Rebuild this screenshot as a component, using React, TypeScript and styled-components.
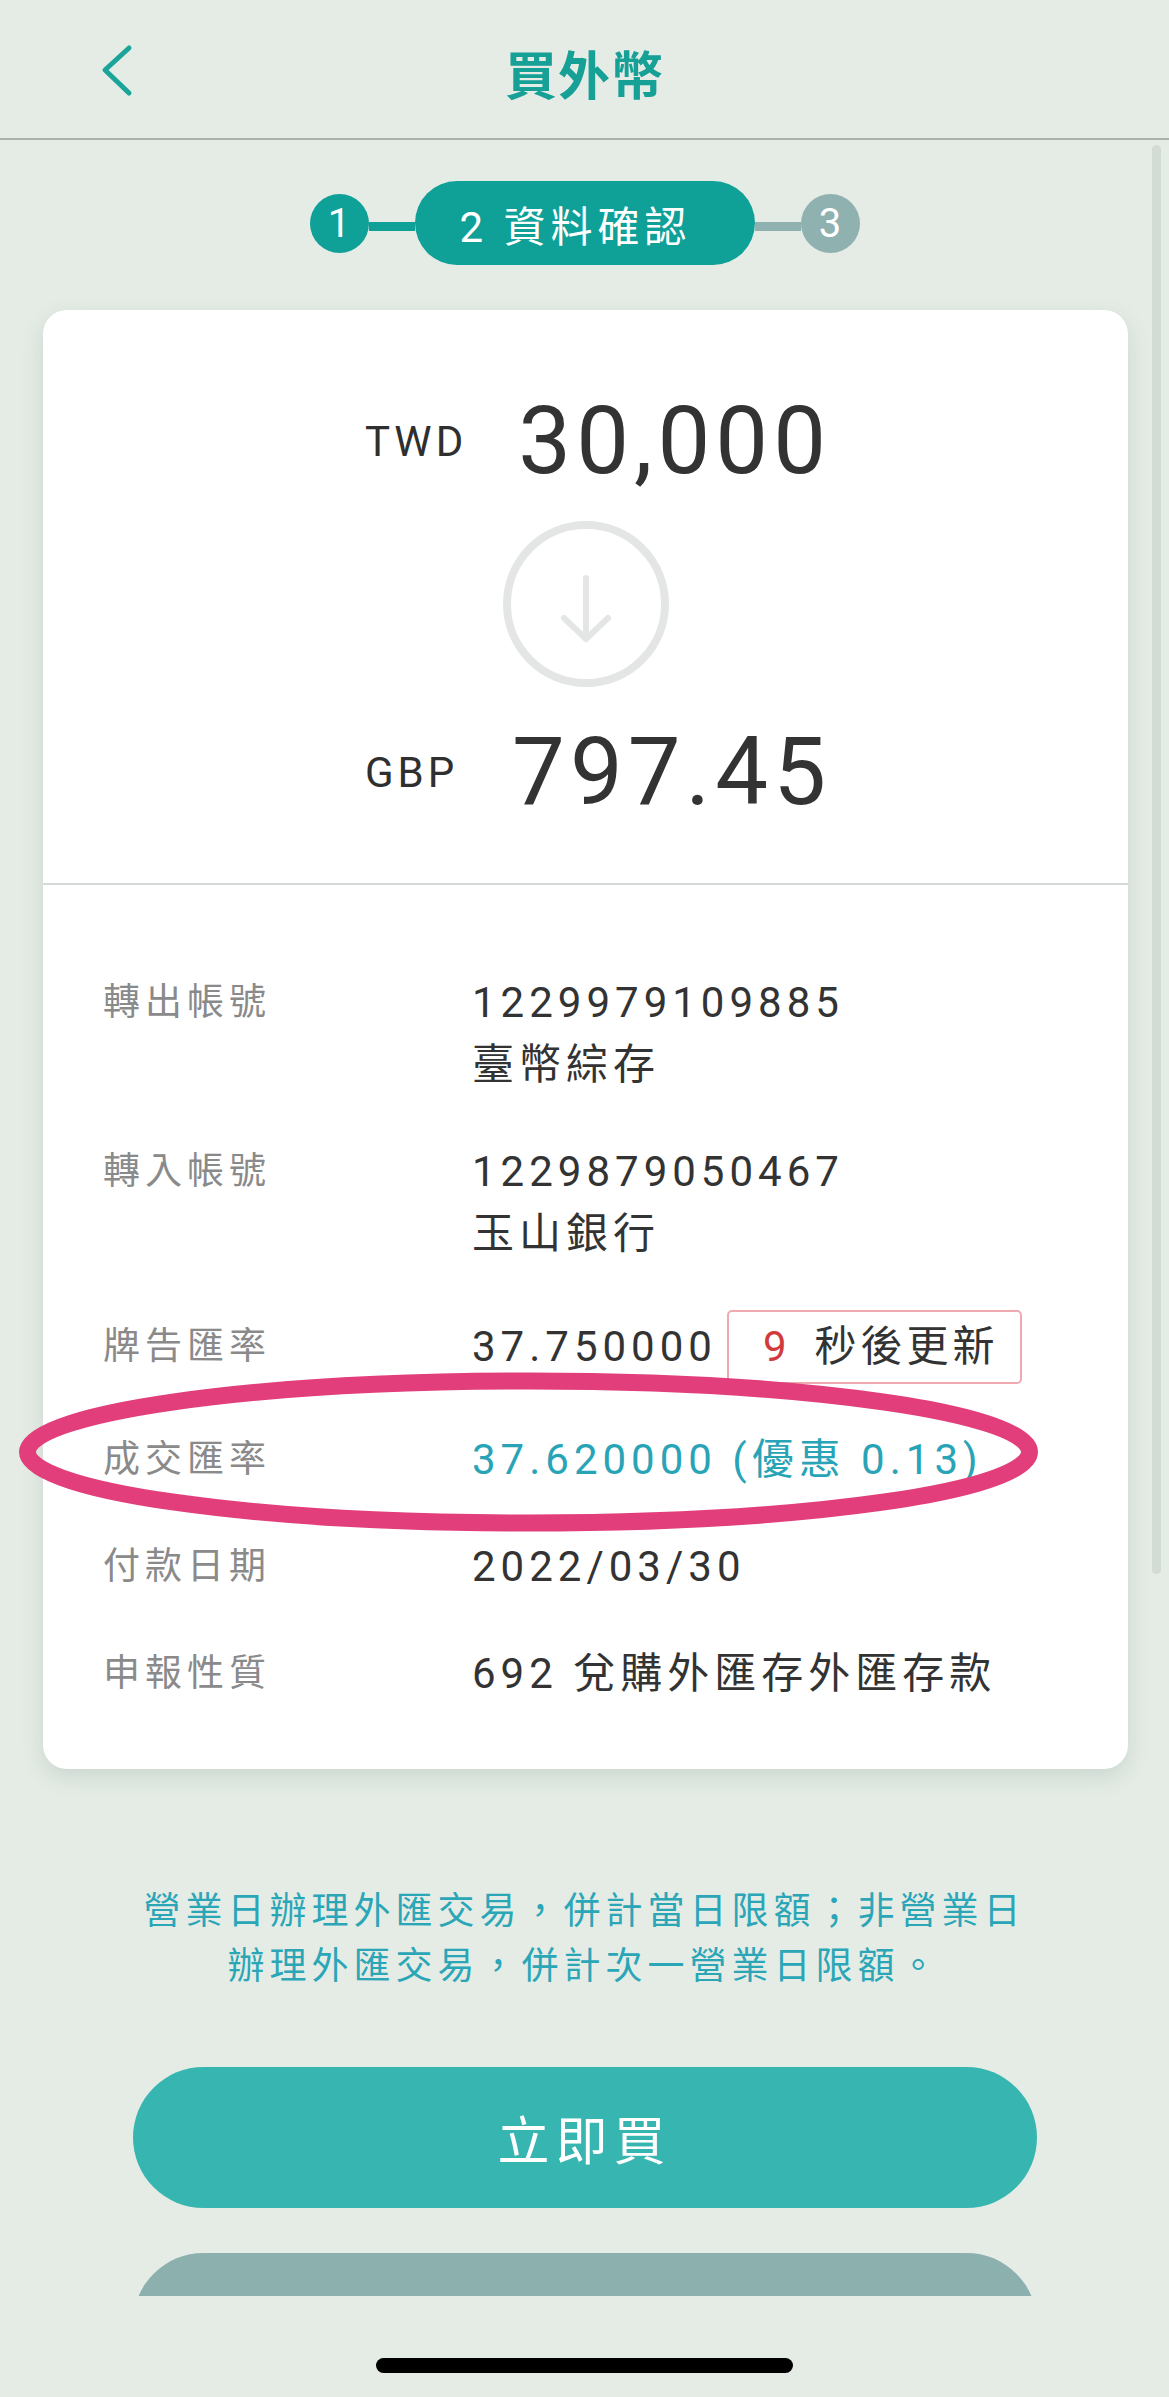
import styled, { createGlobalStyle } from "styled-components";

// ------ Global ------

const GlobalStyle = createGlobalStyle`
  html, body {
    margin: 0;
    padding: 0;
    background: #e5ece6;
  }
  * {
    box-sizing: border-box;
  }
  body {
    font-family: Roboto, "Noto Sans CJK TC", sans-serif;
    color: #333;
  }
`;

// ------ Layout ------

const Screen = styled.div`
  width: 1169px;
  height: 2397px;
  display: flex;
  flex-direction: column;
  overflow: hidden;
  background: #e5ece6;
`;

const Header = styled.header`
  flex: none;
  height: 140px;
  padding-top: 6px;
  display: grid;
  grid-template-columns: 1fr auto 1fr;
  align-items: center;
  border-bottom: 2px solid #aab1ac;
`;

const BackButton = styled.button`
  justify-self: start;
  margin-left: 96px;
  padding: 0;
  border: none;
  background: none;
  display: flex;
`;

const Title = styled.h1`
  margin: 0;
  font-size: 52px;
  font-weight: 700;
  color: #16a096;
  letter-spacing: 1px;
`;

const ScrollArea = styled.main`
  position: relative;
  flex: none;
  height: 2156px;
  overflow: hidden;
  padding-top: 41px;
`;

const ScrollThumb = styled.div`
  position: absolute;
  top: 5px;
  right: 8px;
  width: 9px;
  height: 1429px;
  border-radius: 5px;
  background: #d3dbd5;
`;

// ------ Stepper ------

const Stepper = styled.div`
  display: flex;
  justify-content: center;
  align-items: center;
`;

const StepDot = styled.div<{ $done?: boolean }>`
  width: 59px;
  height: 59px;
  border-radius: 50%;
  display: flex;
  align-items: center;
  justify-content: center;
  font-size: 40px;
  color: #fff;
  background: ${(p) => (p.$done ? "#0fa097" : "#8fb1af")};
`;

const StepLine = styled.div<{ $done?: boolean }>`
  width: 46px;
  height: 9px;
  margin-top: 6px;
  background: ${(p) => (p.$done ? "#0fa097" : "#8fb1af")};
`;

const StepPill = styled.div`
  width: 340px;
  height: 84px;
  border-radius: 42px;
  background: #0fa097;
  display: flex;
  align-items: center;
  padding-left: 45px;
  font-size: 42px;
  letter-spacing: 5px;
  color: #fff;
`;

// ------ Card ------

const Card = styled.section`
  margin: 45px 41px 0 43px;
  background: #fff;
  border-radius: 24px;
  box-shadow: 0 8px 22px rgba(70, 100, 85, 0.16);
`;

const Exchange = styled.div`
  padding: 76px 0 56px;
  display: flex;
  flex-direction: column;
  align-items: flex-start;
`;

const AmountRow = styled.div`
  margin-left: 302px;
  width: 486px;
  height: 110px;
  padding-left: 20px;
  display: grid;
  grid-template-columns: auto 1fr;
  align-items: center;
`;

const Currency = styled.span`
  font-size: 42px;
  letter-spacing: 4px;
  color: #2f2f2f;
`;

const Amount = styled.span`
  font-size: 94px;
  line-height: 110px;
  letter-spacing: 5px;
  text-align: right;
  color: #333;
`;

const ArrowCircle = styled.svg`
  align-self: center;
  margin: 25px 0 30px;
`;

const Details = styled.div`
  border-top: 2px solid #d6dad8;
  padding: 87px 60px 64px;
  display: flex;
  flex-direction: column;
  gap: 45px;
`;

const DetailRow = styled.div<{ $center?: boolean }>`
  position: relative;
  display: grid;
  grid-template-columns: 369px 1fr;
  align-items: ${(p) => (p.$center ? "center" : "start")};
`;

const Label = styled.div`
  font-size: 37px;
  line-height: 62px;
  letter-spacing: 5px;
  color: #8a8a8a;
`;

const Value = styled.div<{ $color?: string }>`
  display: flex;
  flex-direction: column;
  font-size: 42px;
  line-height: 62px;
  letter-spacing: 5px;
  color: ${(p) => p.$color ?? "#333"};
`;

const RateLine = styled.div`
  display: flex;
  align-items: center;
  gap: 10px;
`;

const Countdown = styled.span`
  border: 2px solid #eeaab0;
  border-radius: 5px;
  padding: 4px 21px 4px 34px;
  letter-spacing: 4px;
  color: #333;
`;

const Seconds = styled.span`
  color: #d23b3b;
  margin-right: 24px;
`;

const Highlight = styled.svg`
  position: absolute;
  left: -84px;
  top: -57px;
  pointer-events: none;
`;

// ------ Footer part ------

const Notice = styled.p`
  max-width: 900px;
  margin: 115px auto 0;
  text-align: center;
  font-size: 37px;
  line-height: 55px;
  letter-spacing: 5px;
  color: #2ba6b7;
`;

const ActionButton = styled.button<{ $secondary?: boolean }>`
  display: block;
  width: 904px;
  height: 141px;
  margin: ${(p) => (p.$secondary ? "45px" : "73px")} auto 0;
  border: none;
  border-radius: 71px;
  background: ${(p) => (p.$secondary ? "#8bb0ae" : "#37b6b1")};
  color: #fff;
  font-family: Roboto, "Noto Sans CJK TC", sans-serif;
  font-size: 52px;
  letter-spacing: 6px;
  padding-left: 6px;
`;

const BottomBar = styled.div`
  flex: none;
  height: 101px;
  display: flex;
  justify-content: center;
  padding-top: 62px;
`;

const HomeIndicator = styled.div`
  width: 417px;
  height: 15px;
  border-radius: 8px;
  background: #000;
`;

// ------ Data ------

const rows = [
  { label: "轉出帳號", lines: ["1229979109885", "臺幣綜存"] },
  { label: "轉入帳號", lines: ["1229879050467", "玉山銀行"] },
];

// ------ App ------

const App = () => {
  return (
    <>
      <GlobalStyle />
      <Screen>
        <Header>
          <BackButton aria-label="back">
            <svg width="40" height="56" viewBox="0 0 40 56">
              <path
                d="M33 4 L9 26 L33 49"
                fill="none"
                stroke="#1ba59a"
                strokeWidth="5"
                strokeLinecap="round"
                strokeLinejoin="round"
              />
            </svg>
          </BackButton>
          <Title>買外幣</Title>
          <div />
        </Header>

        <ScrollArea>
          <ScrollThumb />
          <Stepper>
            <StepDot $done>1</StepDot>
            <StepLine $done />
            <StepPill>2 資料確認</StepPill>
            <StepLine />
            <StepDot>3</StepDot>
          </Stepper>

          <Card>
            <Exchange>
              <AmountRow>
                <Currency>TWD</Currency>
                <Amount>30,000</Amount>
              </AmountRow>
              <ArrowCircle width="166" height="166" viewBox="0 0 166 166">
                <circle cx="83" cy="83" r="79" fill="none" stroke="#e3e6e4" strokeWidth="8" />
                <path
                  d="M83 57 V118 M61 97 L83 118 L105 97"
                  fill="none"
                  stroke="#e3e6e4"
                  strokeWidth="6"
                  strokeLinecap="round"
                  strokeLinejoin="round"
                />
              </ArrowCircle>
              <AmountRow>
                <Currency>GBP</Currency>
                <Amount>797.45</Amount>
              </AmountRow>
            </Exchange>

            <Details>
              {rows.map((row) => (
                <DetailRow key={row.label}>
                  <Label>{row.label}</Label>
                  <Value>
                    {row.lines.map((line) => (
                      <span key={line}>{line}</span>
                    ))}
                  </Value>
                </DetailRow>
              ))}

              <DetailRow $center>
                <Label>牌告匯率</Label>
                <Value>
                  <RateLine>
                    <span>37.750000</span>
                    <Countdown>
                      <Seconds>9</Seconds>秒後更新
                    </Countdown>
                  </RateLine>
                </Value>
              </DetailRow>

              <DetailRow>
                <Label>成交匯率</Label>
                <Value $color="#29a4b6">37.620000 (優惠 0.13)</Value>
                <Highlight width="1019" height="160" viewBox="0 0 1019 160">
                  <ellipse
                    cx="509.5"
                    cy="80"
                    rx="501"
                    ry="71"
                    fill="none"
                    stroke="#e23e7b"
                    strokeWidth="17"
                  />
                </Highlight>
              </DetailRow>

              <DetailRow>
                <Label>付款日期</Label>
                <Value>2022/03/30</Value>
              </DetailRow>

              <DetailRow>
                <Label>申報性質</Label>
                <Value>692 兌購外匯存外匯存款</Value>
              </DetailRow>
            </Details>
          </Card>

          <Notice>
            營業日辦理外匯交易，併計當日限額；非營業日辦理外匯交易，併計次一營業日限額。
          </Notice>

          <ActionButton>立即買</ActionButton>
          <ActionButton $secondary>取消</ActionButton>
        </ScrollArea>

        <BottomBar>
          <HomeIndicator />
        </BottomBar>
      </Screen>
    </>
  );
};

export default App;
